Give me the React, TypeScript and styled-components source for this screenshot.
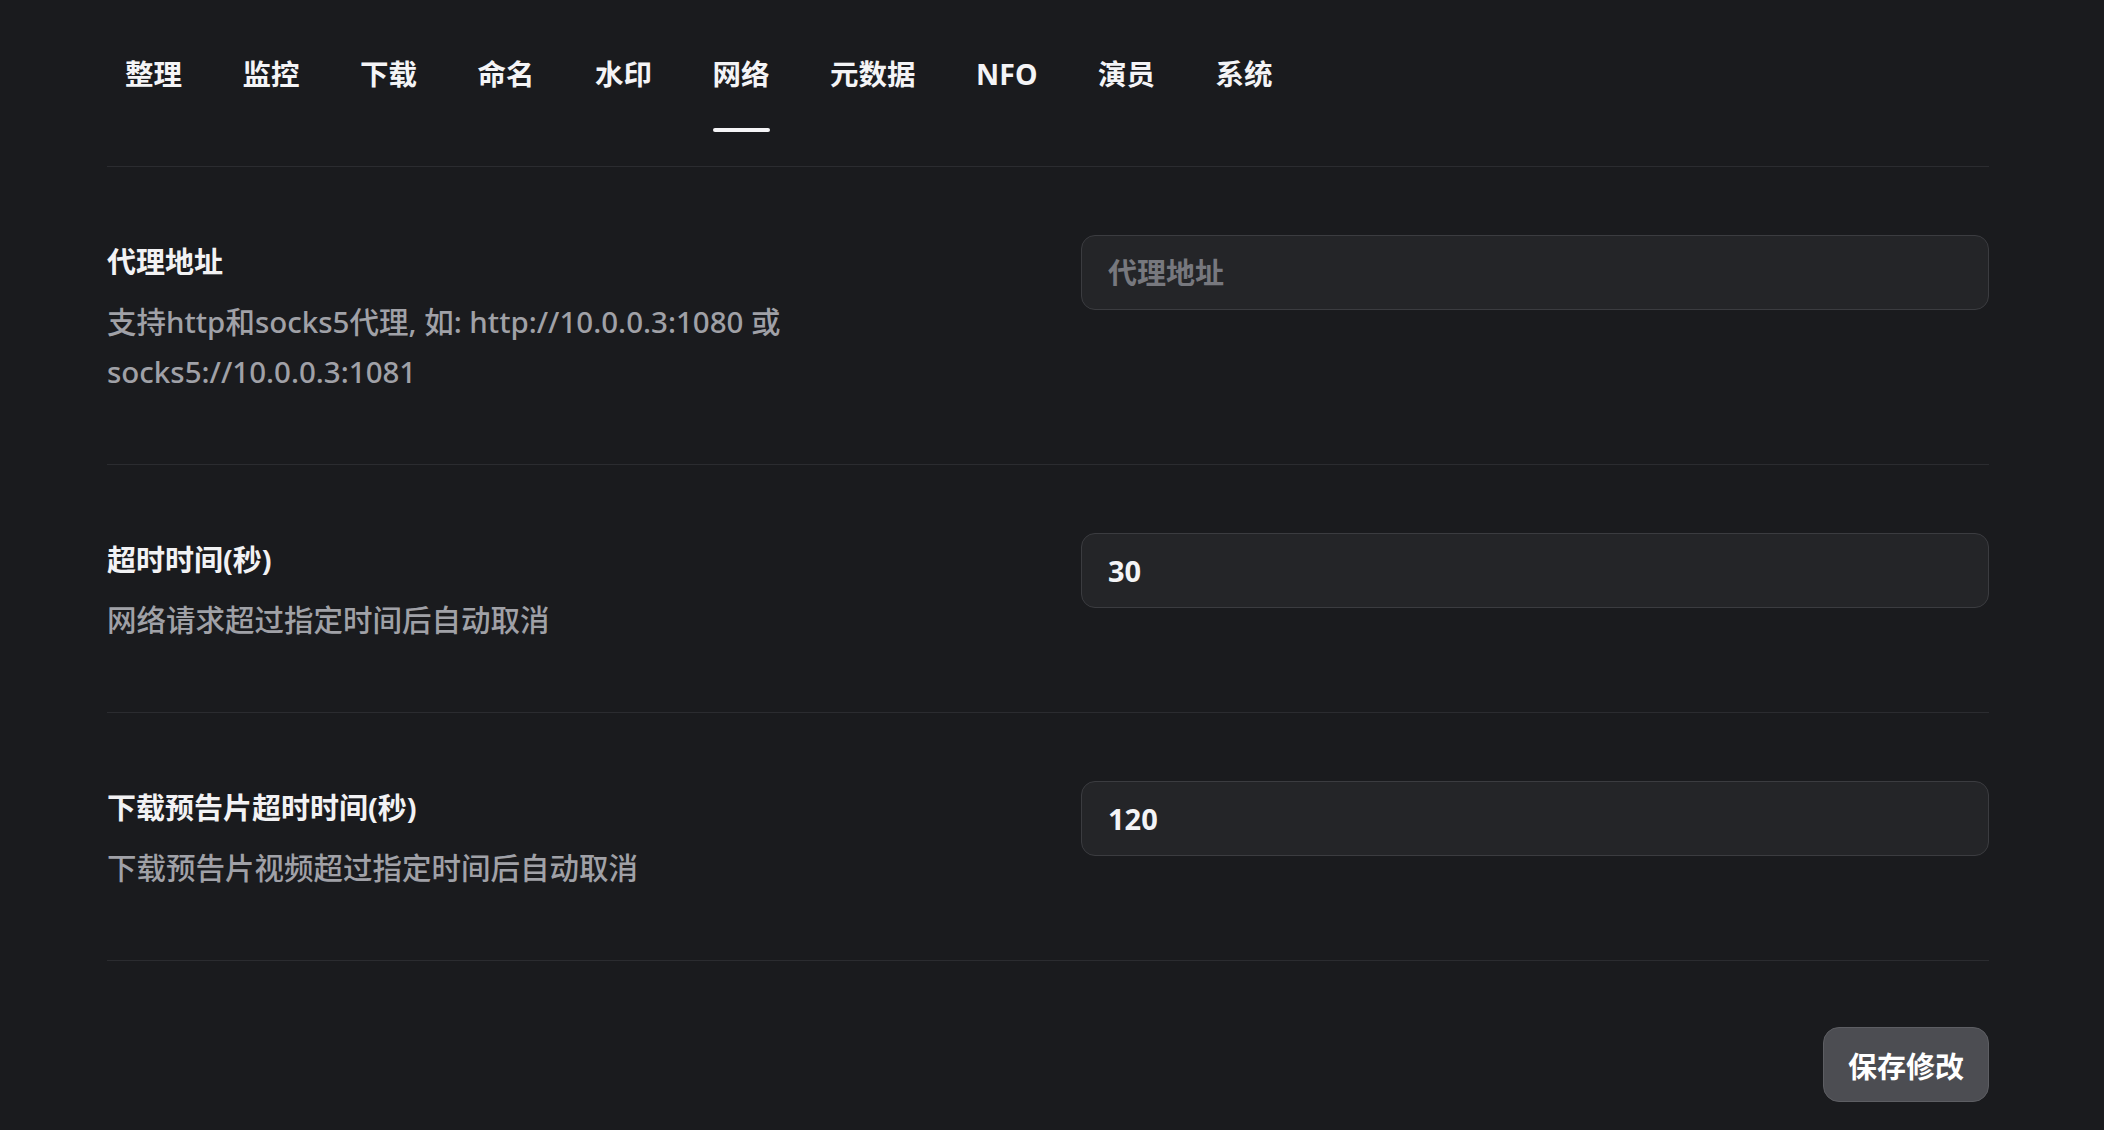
import styled, { createGlobalStyle } from 'styled-components';

const FONT = `"Noto Sans", "Noto Sans CJK SC", sans-serif`;

const GlobalStyle = createGlobalStyle`
  html, body {
    margin: 0;
    padding: 0;
    background: #1a1b1e;
  }
  body {
    font-family: ${FONT};
    color: #f0f0f2;
  }
  * {
    box-sizing: border-box;
  }
`;

const TABS = ['整理', '监控', '下载', '命名', '水印', '网络', '元数据', 'NFO', '演员', '系统'];

const FIELDS = [
  {
    title: '代理地址',
    desc: '支持http和socks5代理, 如: http://10.0.0.3:1080 或 socks5://10.0.0.3:1081',
    value: '',
    placeholder: '代理地址',
  },
  {
    title: '超时时间(秒)',
    desc: '网络请求超过指定时间后自动取消',
    value: '30',
    placeholder: '',
  },
  {
    title: '下载预告片超时时间(秒)',
    desc: '下载预告片视频超过指定时间后自动取消',
    value: '120',
    placeholder: '',
  },
];

function App() {
  return (
    <>
      <GlobalStyle />
      <StPage>
        <StTabBar>
          {TABS.map((tab) => (
            <StTab key={tab} $active={tab === '网络'}>
              {tab}
            </StTab>
          ))}
        </StTabBar>
        {FIELDS.map((field) => (
          <StFieldRow key={field.title}>
            <StFieldInfo>
              <StFieldTitle>{field.title}</StFieldTitle>
              <StFieldDesc>{field.desc}</StFieldDesc>
            </StFieldInfo>
            <StInput defaultValue={field.value} placeholder={field.placeholder} />
          </StFieldRow>
        ))}
        <StFooter>
          <StSaveButton>保存修改</StSaveButton>
        </StFooter>
      </StPage>
    </>
  );
}

const StPage = styled.div`
  padding: 0 115px 40px 107px;
`;

const StTabBar = styled.nav`
  display: flex;
  gap: 60.5px;
  padding: 54px 0 34px 18px;
  border-bottom: 1px solid #2b2c30;
`;

const StTab = styled.button<{ $active?: boolean }>`
  position: relative;
  background: none;
  border: none;
  padding: 0 0 38px 0;
  margin: 0;
  font-family: ${FONT};
  font-size: 28.5px;
  line-height: 40px;
  font-weight: 700;
  color: #f4f4f6;
  cursor: pointer;

  &::after {
    content: '';
    display: ${({ $active }) => ($active ? 'block' : 'none')};
    position: absolute;
    left: 0;
    right: 0;
    bottom: 0;
    height: 4px;
    border-radius: 2px;
    background: #f4f4f6;
  }
`;

const StFieldRow = styled.div`
  display: grid;
  grid-template-columns: 1fr 1fr;
  column-gap: 66px;
  align-items: start;
  padding: 68px 0 67px;
  border-bottom: 1px solid #2b2c30;
`;

const StFieldInfo = styled.div`
  display: flex;
  flex-direction: column;
`;

const StFieldTitle = styled.h3`
  margin: 0;
  font-size: 29px;
  line-height: 54px;
  font-weight: 700;
  color: #f2f2f4;
`;

const StFieldDesc = styled.p`
  margin: 8px 0 0 0;
  max-width: 740px;
  font-size: 29.5px;
  line-height: 50px;
  font-weight: 500;
  color: #a0a1a7;
`;

const StInput = styled.input`
  width: 100%;
  height: 75px;
  padding: 0 26px;
  border: 1px solid #3b3c40;
  border-radius: 14px;
  background: #242528;
  font-family: ${FONT};
  font-size: 29px;
  font-weight: 700;
  color: #f4f4f6;
  outline: none;

  &::placeholder {
    color: #77787e;
  }
`;

const StFooter = styled.div`
  display: flex;
  justify-content: flex-end;
  padding-top: 66px;
`;

const StSaveButton = styled.button`
  height: 75px;
  padding: 0 24px;
  border: 1px solid #5d5e63;
  border-radius: 16px;
  background: #4c4d52;
  font-family: ${FONT};
  font-size: 29px;
  font-weight: 700;
  color: #ffffff;
  cursor: pointer;
`;

export default App;
